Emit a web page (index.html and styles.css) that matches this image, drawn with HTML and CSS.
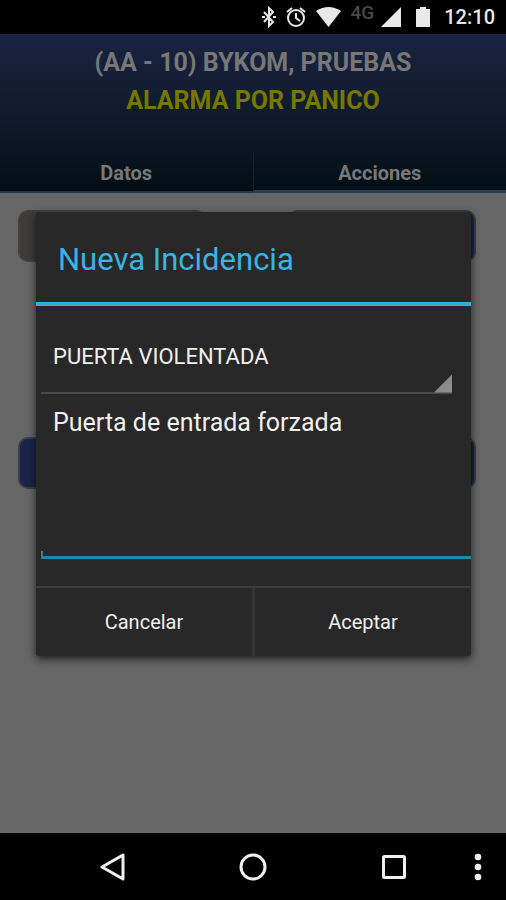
FILE: index.html
```html
<!DOCTYPE html>
<html lang="es">
<head>
<meta charset="utf-8">
<meta name="viewport" content="width=device-width, initial-scale=1">
<title>Nueva Incidencia</title>
<link rel="stylesheet" href="styles.css">
</head>
<body>
<div class="status">
  <svg class="status-bt" viewBox="0 0 14 22" width="14" height="22"><path d="M2 6l9 10-4 4V2l4 4L2 16" fill="none" stroke="currentColor" stroke-width="2"/><path d="M0 10h3v2H0zM11 10h3v2h-3z" fill="currentColor"/></svg>
  <svg class="status-alarm" viewBox="0 0 20 22" width="20" height="22"><g fill="none" stroke="currentColor" stroke-width="2"><circle cx="10" cy="12" r="8"/><path d="M10 7v5l4 3M1 6l5-4M19 6l-5-4"/></g></svg>
  <svg class="status-wifi" viewBox="0 0 25 20" width="25" height="20"><path d="M0 4Q12.500-4 25 4L12.500 20z" fill="currentColor"/></svg>
  <span class="status-net">4G</span>
  <svg class="status-signal" viewBox="0 0 20 20" width="20" height="20"><path d="M20 0v20H0z" fill="currentColor"/></svg>
  <svg class="status-battery" viewBox="0 0 14 20" width="14" height="20"><path d="M4 0h6v2h4v18H0V2h4z" fill="currentColor"/></svg>
  <time class="status-time">12:10</time>
</div>

<div class="stage">
  <header class="header">
    <h1 class="heading">(AA - 10) BYKOM, PRUEBAS</h1>
    <p class="alarm">ALARMA POR PANICO</p>
    <nav class="tabs">
      <a class="tab" href="#datos">Datos</a>
      <a class="tab tab-active" href="#acciones">Acciones</a>
    </nav>
  </header>
  <main class="actions">
    <button class="action action-grey" type="button" aria-label="Acción 1"></button>
    <button class="action action-blue" type="button" aria-label="Acción 2"></button>
    <button class="action action-blue" type="button" aria-label="Acción 3"></button>
    <button class="action action-teal" type="button" aria-label="Acción 4"></button>
  </main>

  <div class="overlay">
    <form class="dialog" role="dialog" aria-labelledby="dialog-title">
      <h2 class="dialog-title" id="dialog-title">Nueva Incidencia</h2>
      <div class="dialog-body">
        <div class="spinner">
          <select class="spinner-select" aria-label="Tipo de incidencia">
            <option>PUERTA VIOLENTADA</option>
          </select>
        </div>
        <div class="note">
          <textarea class="note-text" aria-label="Descripción" spellcheck="false">Puerta de entrada forzada</textarea>
        </div>
      </div>
      <div class="dialog-buttons">
        <button class="dialog-button" type="button">Cancelar</button>
        <button class="dialog-button" type="button">Aceptar</button>
      </div>
    </form>
  </div>
</div>

<div class="navbar">
  <button class="nav-button" type="button" aria-label="Atrás"><svg viewBox="0 0 28 28" width="28" height="28"><path d="M24 2v24L3 14z" fill="none" stroke="currentColor" stroke-width="3" stroke-linejoin="round"/></svg></button>
  <button class="nav-button" type="button" aria-label="Inicio"><svg viewBox="0 0 28 28" width="28" height="28"><circle cx="14" cy="14" r="12" fill="none" stroke="currentColor" stroke-width="3"/></svg></button>
  <button class="nav-button" type="button" aria-label="Recientes"><svg viewBox="0 0 28 28" width="28" height="28"><rect x="3.500" y="3.500" width="21" height="21" rx="1" fill="none" stroke="currentColor" stroke-width="3"/></svg></button>
  <button class="nav-button nav-menu" type="button" aria-label="Menú"><svg viewBox="0 0 8 28" width="8" height="28"><g fill="currentColor"><circle cx="4" cy="4" r="3.300"/><circle cx="4" cy="14" r="3.300"/><circle cx="4" cy="24" r="3.300"/></g></svg></button>
</div>
</body>
</html>
```

FILE: styles.css
```css
* {
  box-sizing: border-box;
}

body {
  margin: 0;
  min-height: 100vh;
  display: flex;
  flex-direction: column;
  background: #000;
  color: #f0f0f0;
  font-family: Roboto, sans-serif;
}

button,
select,
textarea {
  margin: 0;
  padding: 0;
  border: 0;
  border-radius: 0;
  outline: 0;
  background: none;
  color: inherit;
  font: inherit;
}

svg {
  display: block;
}

.status {
  height: 34px;
  padding-right: 11px;
  display: flex;
  align-items: center;
  justify-content: flex-end;
  color: #e8e8e8;
}

.status-alarm {
  margin-left: 10px;
}

.status-wifi {
  margin-left: 10px;
}

.status-net {
  margin-left: 10px;
  padding-bottom: 8px;
  color: #484848;
  font-size: 19px;
  line-height: 20px;
  font-weight: 500;
}

.status-signal {
  margin-left: 7px;
}

.status-battery {
  margin-left: 15px;
}

.status-time {
  margin-left: 14px;
  font-size: 20px;
  font-weight: 500;
}

.stage {
  position: relative;
  flex: 1;
  display: flex;
  flex-direction: column;
  background: #666;
}

.header {
  padding-top: 10px;
  background: linear-gradient(#1a2340, #0d1929 60%, #020e14);
  color: #777;
  text-align: center;
}

.heading,
.alarm {
  margin: 0;
  font-size: 25px;
  line-height: 38px;
  font-weight: 700;
}

.alarm {
  color: #777800;
}

.tabs {
  margin-top: 33px;
  display: flex;
}

.tab {
  flex: 1;
  height: 40px;
  border-bottom: 2px solid #26364a;
  color: #777;
  font-size: 20px;
  line-height: 40px;
  font-weight: 700;
  text-decoration: none;
}

.tab-active {
  border-left: 1px solid #14242b;
  border-bottom: 3px solid #2b3d52;
}

.actions {
  padding: 17px 30px 0 18px;
  display: grid;
  grid-template-columns: 1fr 1fr;
  column-gap: 82px;
  row-gap: 175px;
}

.action {
  height: 52px;
  border: 2px solid #3a3f48;
  border-radius: 10px;
}

.action-grey {
  border-color: #434343;
  background: #3e3b3b;
}

.action-blue {
  background: #192548;
}

.action-teal {
  background: #182430;
}

.overlay {
  position: absolute;
  inset: 0;
  padding: 0 35px 0 36px;
  display: flex;
  align-items: center;
}

.dialog {
  flex: 1;
  border-radius: 3px;
  background: #282828;
  box-shadow: 0 3px 9px rgba(0, 0, 0, 0.7);
}

.dialog-title {
  margin: 0;
  padding: 6px 22px 0;
  border-bottom: 4px solid #39aad4;
  color: #39b4e4;
  font-size: 31px;
  line-height: 84px;
  font-weight: 400;
}

.dialog-body {
  padding: 16px 0 27px 5px;
}

.spinner {
  position: relative;
  margin-right: 19px;
  border-bottom: 2px solid #484848;
}

.spinner::after {
  content: "";
  position: absolute;
  right: 0;
  bottom: -1px;
  width: 18px;
  height: 18px;
  background: #8c8c8c;
  clip-path: polygon(100% 0, 100% 100%, 0 100%);
  pointer-events: none;
}

.spinner-select {
  display: block;
  width: 100%;
  height: 70px;
  padding: 0 12px;
  appearance: none;
  font-size: 22px;
}

.note {
  border-bottom: 3px solid #2087ac;
}

.note-text {
  display: block;
  width: 100%;
  height: 162px;
  padding: 13px 12px 0;
  background: linear-gradient(#2087ac, #2087ac) left bottom / 2px 5px no-repeat;
  font-size: 25px;
  line-height: 32px;
  resize: none;
}

.dialog-buttons {
  display: flex;
  border-top: 2px solid #3b3b3b;
}

.dialog-button {
  flex: 1;
  height: 68px;
  font-size: 20px;
}

.dialog-button + .dialog-button {
  border-left: 3px solid #343434;
}

.navbar {
  height: 67px;
  padding: 0 24px 0 43px;
  display: flex;
  align-items: center;
}

.nav-button {
  flex: 1;
  display: flex;
  justify-content: center;
}

.nav-menu {
  flex: none;
  width: 8px;
  margin-left: 10px;
}
```
